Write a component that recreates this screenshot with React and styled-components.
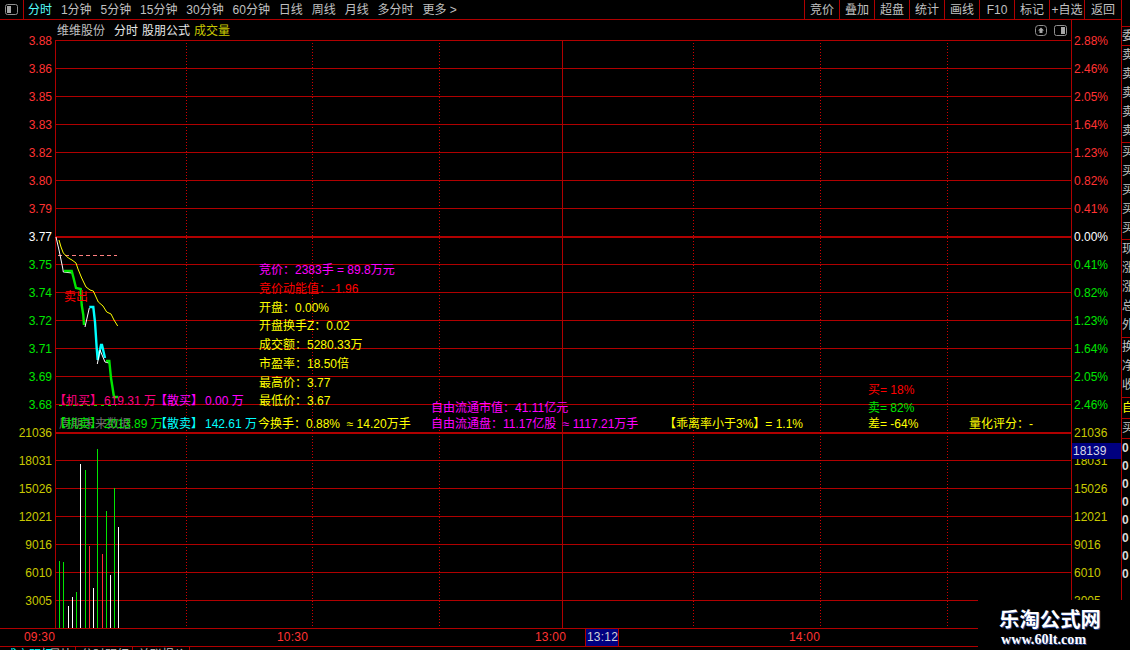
import React from 'react';
import styled, { createGlobalStyle } from 'styled-components';

const RED = '#ff3232';
const GREEN = '#00e600';
const YELLOW = '#c8c800';
const BRIGHT = '#ffff00';
const MAGENTA = '#ff00ff';
const CYAN = '#00ffff';
const PINK = '#ff0080';
const LINE = '#b00000';
const GREY = '#c0c0c0';

const Global = createGlobalStyle`
  html, body { margin: 0; padding: 0; background: #000; }
  * { box-sizing: border-box; }
`;

const Screen = styled.div`
  position: relative;
  display: flex;
  width: 1130px;
  height: 650px;
  overflow: hidden;
  background: #000;
  font: 12px/14px "Liberation Sans", "Noto Sans CJK SC", sans-serif;
  color: ${GREY};
`;
const Main = styled.div`
  display: flex;
  flex-direction: column;
  width: 1121px;
  flex: none;
`;
const TopBar = styled.div`
  display: flex;
  height: 20px;
  flex: none;
  border-bottom: 1px solid ${LINE};
`;
const ToggleCell = styled.div`
  display: flex;
  align-items: center;
  justify-content: center;
  width: 24px;
  border-right: 1px solid ${LINE};
  flex: none;
`;
const Tabs = styled.div`
  display: flex;
  align-items: center;
  gap: 8.9px;
  padding-left: 4px;
  flex: 1;
`;
const Tab = styled.span`
  color: ${p => (p.$active ? '#54fcfc' : GREY)};
  white-space: nowrap;
`;
const ToolButton = styled.span`
  display: flex;
  align-items: center;
  justify-content: center;
  width: ${p => p.$w || 35}px;
  flex: none;
  border-left: 1px solid ${LINE};
  white-space: nowrap;
`;
const TitleRow = styled.div`
  display: flex;
  height: 20px;
  flex: none;
`;
const TitleMain = styled.div`
  display: flex;
  align-items: center;
  flex: 1;
  padding: 1px 4px 0 57px;
`;
const TitleText = styled.span`
  margin-right: ${p => p.$gap || 0}px;
  color: ${p => p.$color || GREY};
  white-space: nowrap;
`;
const TitleIcons = styled.div`
  display: flex;
  align-items: center;
  gap: 7px;
  margin-left: auto;
  padding-bottom: 1px;
`;
const TitleCorner = styled.div`
  width: 50px;
  flex: none;
  border-left: 1px solid ${LINE};
`;
const ChartRow = styled.div`
  display: flex;
  height: 588px;
  flex: none;
`;
const LeftAxis = styled.div`
  display: flex;
  flex-direction: column;
  width: 55px;
  height: 588px;
  margin-top: -13px;
  padding-right: 3px;
  flex: none;
`;
const RightAxis = styled.div`
  position: relative;
  width: 50px;
  flex: none;
  border-left: 1px solid ${LINE};
`;
const RightLabels = styled.div`
  display: flex;
  flex-direction: column;
  height: 588px;
  margin-top: -13px;
  padding-left: 2px;
`;
const AxisLabel = styled.span`
  display: flex;
  align-items: center;
  justify-content: ${p => (p.$right ? 'flex-end' : 'flex-start')};
  height: 28px;
  flex: none;
  color: ${p => p.$color};
`;
const CursorValue = styled.div`
  position: absolute;
  left: 0;
  top: 403px;
  width: 49px;
  height: 16px;
  padding-left: 1px;
  background: #000080;
  color: #d8d8e8;
  line-height: 16px;
`;
const Plot = styled.div`
  position: relative;
  width: 1016px;
  height: 588px;
  flex: none;
`;
const ChartSvg = styled.svg`
  position: absolute;
  left: 0;
  top: 0;
  overflow: visible;
`;
const Stats = styled.div`
  position: absolute;
  left: 204px;
  top: 221px;
  display: flex;
  flex-direction: column;
  line-height: 18.75px;
  white-space: nowrap;
`;
const Stat = styled.span`
  color: ${p => p.$color || BRIGHT};
`;
const Note = styled.span`
  position: absolute;
  left: ${p => p.$x - 55}px;
  top: ${p => p.$y - 47}px;
  color: ${p => p.$color};
  white-space: nowrap;
`;
const Ledger = styled.div`
  position: absolute;
  left: -1px;
  top: ${p => p.$y - 47}px;
  display: flex;
  white-space: nowrap;
`;
const Tag = styled.span`
  width: 48px;
  flex: none;
  color: ${p => p.$color};
`;
const Amount = styled.span`
  width: ${p => p.$w}px;
  margin-left: 2px;
  flex: none;
  color: ${p => p.$color};
`;
const TimeAxis = styled.div`
  display: flex;
  height: 19px;
  flex: none;
  padding-left: 24px;
  border-top: 1px solid ${LINE};
  border-bottom: 1px solid ${LINE};
  line-height: 16px;
`;
const TimeSlot = styled.span`
  width: ${p => p.$w}px;
  flex: none;
  color: ${RED};
  letter-spacing: 0.2px;
`;
const TimeCursor = styled.span`
  width: 34px;
  flex: none;
  margin-right: 170px;
  padding-left: 1px;
  border-left: 1px solid ${LINE};
  border-right: 1px solid ${LINE};
  background: #000080;
  color: #d0d0d8;
  letter-spacing: 0.2px;
`;
const Footer = styled.div`
  display: flex;
  height: 4px;
  overflow: hidden;
  flex: none;
`;
const FooterTab = styled.span`
  width: ${p => p.$w}px;
  flex: none;
  padding: 1px 0 0 5px;
  border-right: 1px solid ${LINE};
  color: ${p => p.$color || GREY};
  white-space: nowrap;
`;
const Strip = styled.div`
  display: flex;
  flex-direction: column;
  width: 9px;
  height: 600px;
  flex: none;
  overflow: hidden;
  border-left: 1px solid ${LINE};
`;
const StripSpacer = styled.div`
  height: 26px;
  flex: none;
`;
const StripGroup = styled.div`
  display: flex;
  flex-direction: column;
  height: ${p => p.$h}px;
  flex: none;
  border-top: 1px solid ${LINE};
`;
const StripChar = styled.span`
  display: block;
  width: 12px;
  height: ${p => p.$h}px;
  line-height: ${p => p.$h}px;
  color: ${p => p.$color || GREY};
  font-weight: ${p => (p.$bold ? 700 : 400)};
`;
const Watermark = styled.div`
  position: absolute;
  right: 0;
  bottom: 0;
  width: 152px;
  height: 50px;
  display: flex;
  flex-direction: column;
  align-items: flex-start;
  padding: 6px 0 0 21px;
  background: #000;
`;
const WatermarkTitle = styled.span`
  color: #fff;
  font: 700 20.4px/24px "Noto Sans CJK SC", sans-serif;
  text-shadow: 1px 1px 0 #27408b;
  white-space: nowrap;
`;
const WatermarkUrl = styled.span`
  margin: 2px 0 0 2px;
  color: #fff;
  font: 700 14px/16px "Liberation Serif", serif;
  letter-spacing: 0.1px;
  text-shadow: 1px 1px 0 #27408b;
  white-space: nowrap;
`;

const leftLabels = [
  ['3.88', RED], ['3.86', RED], ['3.85', RED], ['3.83', RED], ['3.82', RED], ['3.80', RED], ['3.79', RED],
  ['3.77', '#fff'],
  ['3.75', GREEN], ['3.74', GREEN], ['3.72', GREEN], ['3.71', GREEN], ['3.69', GREEN], ['3.68', GREEN],
  ['21036', YELLOW], ['18031', YELLOW], ['15026', YELLOW], ['12021', YELLOW], ['9016', YELLOW], ['6010', YELLOW], ['3005', YELLOW],
];
const rightLabels = [
  ['2.88%', RED], ['2.46%', RED], ['2.05%', RED], ['1.64%', RED], ['1.23%', RED], ['0.82%', RED], ['0.41%', RED],
  ['0.00%', '#fff'],
  ['0.41%', GREEN], ['0.82%', GREEN], ['1.23%', GREEN], ['1.64%', GREEN], ['2.05%', GREEN], ['2.46%', GREEN],
  ['21036', YELLOW], ['18031', YELLOW], ['15026', YELLOW], ['12021', YELLOW], ['9016', YELLOW], ['6010', YELLOW], ['3005', YELLOW],
];
const tabs = ['1分钟', '5分钟', '15分钟', '30分钟', '60分钟', '日线', '周线', '月线', '多分时', '更多 >'];
const tools = ['竞价', '叠加', '超盘', '统计', '画线', 'F10', '标记', '+自选'];
const hLines = Array.from({ length: 20 }, (_, i) => 68 + i * 28).filter(y => y !== 236 && y !== 432);
const dotted = [186, 312, 439, 693, 820, 947];
const bars = [
  [59, 561, GREEN], [63, 562, GREEN], [68, 606, '#fff'], [72, 597, '#fff'], [76, 592, GREEN],
  [80, 464, '#fff'], [85, 470, GREEN], [89, 546, RED], [93, 588, '#fff'], [97, 449, GREEN],
  [102, 554, RED], [106, 511, GREEN], [110, 575, '#fff'], [114, 488, GREEN], [118, 527, '#fff'],
];
const pts = a => a.map(p => p.join(',')).join(' ');
const priceSegments = [
  { color: '#fff', w: 1, points: [[56, 237], [59, 250], [62.7, 268], [63.3, 272], [72, 273]] },
  { color: GREEN, w: 2.4, points: [[64, 271], [71.7, 271], [73.3, 277], [76, 288], [80.7, 289], [81.7, 305], [83.3, 315], [84, 325]] },
  { color: '#fff', w: 1, points: [[85, 327], [89.3, 308]] },
  { color: CYAN, w: 2.4, points: [[89.3, 307], [93.3, 307], [95, 322], [96.7, 348], [97.7, 360], [101, 345], [102, 345], [105, 358]] },
  { color: '#fff', w: 1, points: [[97.3, 364], [100, 350], [105, 362], [109, 363]] },
  { color: GREEN, w: 2.4, points: [[106, 361], [109.3, 361], [111, 378], [114, 397], [118.3, 397]] },
];
const avgLine = [[59, 240], [61, 247], [63.3, 253], [68.3, 258], [72, 260], [76, 263], [78, 269], [81.7, 278], [86, 287], [90, 290], [93.3, 291], [98.3, 302], [103, 306], [106.7, 312], [111, 314], [114, 320], [117.7, 326]];

const ToggleIcon = ({ side }) => (
  <svg width="13" height="11" viewBox="0 0 13 11">
    <rect x="0.5" y="0.5" width="12" height="10" rx="2" fill="#000" stroke="#909090" />
    <rect x={side === 'left' ? 2 : 7} y="2" width="4" height="7" fill="#a8a8a8" />
  </svg>
);
const UpIcon = () => (
  <svg width="12" height="11" viewBox="0 0 12 11">
    <rect x="0.5" y="0.5" width="11" height="10" rx="3" fill="#000" stroke="#909090" />
    <path d="M6 2.5 L9 5.5 H7.5 V8 H4.5 V5.5 H3 Z" fill="#a8a8a8" />
  </svg>
);

const ChartDrawing = () => (
  <ChartSvg width="1016" height="588" viewBox="0 0 1016 588">
    <g transform="translate(-55 -40)" fill="none">
      <g shapeRendering="crispEdges">
        <line x1="55" x2="1071" y1="40.5" y2="40.5" stroke={LINE} />
        {hLines.map(y => <line key={y} x1="55" x2="1071" y1={y + 0.5} y2={y + 0.5} stroke={LINE} />)}
        <line x1="55" x2="1071" y1="237" y2="237" stroke={LINE} strokeWidth="2" />
        <line x1="55" x2="1071" y1="433" y2="433" stroke={LINE} strokeWidth="2" />
        <line x1="55.5" x2="55.5" y1="40" y2="628" stroke={LINE} />
        <line x1="562.5" x2="562.5" y1="40" y2="628" stroke={LINE} />
        {dotted.map(x => (
          <line key={x} x1={x + 0.5} x2={x + 0.5} y1="43" y2="626" stroke="#d00000" strokeDasharray="1 2" />
        ))}
        <line x1="58" x2="117" y1="255.5" y2="255.5" stroke="#ff8080" strokeDasharray="4 3" />
        <line x1="59" x2="116" y1="405.5" y2="405.5" stroke={GREEN} strokeDasharray="3 4" />
        {bars.map(([x, top, color]) => (
          <line key={x} x1={x + 0.5} x2={x + 0.5} y1={top} y2="628" stroke={color} />
        ))}
      </g>
      <polyline points={pts(avgLine)} stroke="#ffff00" strokeWidth="1" />
      {priceSegments.map((s, i) => (
        <polyline key={i} points={pts(s.points)} stroke={s.color} strokeWidth={s.w} />
      ))}
    </g>
  </ChartSvg>
);

export default function App() {
  return (
    <Screen>
      <Global />
      <Main>
        <TopBar>
          <ToggleCell><ToggleIcon side="left" /></ToggleCell>
          <Tabs>
            <Tab $active>分时</Tab>
            {tabs.map(t => <Tab key={t}>{t}</Tab>)}
          </Tabs>
          {tools.map(t => <ToolButton key={t}>{t}</ToolButton>)}
          <ToolButton $w={37}>返回</ToolButton>
        </TopBar>
        <TitleRow>
          <TitleMain>
            <TitleText $gap={9}>维维股份</TitleText>
            <TitleText $gap={4} $color="#e8e8e8">分时</TitleText>
            <TitleText $gap={4} $color="#e8e8e8">股朋公式</TitleText>
            <TitleText $color={YELLOW}>成交量</TitleText>
            <TitleIcons>
              <UpIcon />
              <ToggleIcon side="right" />
            </TitleIcons>
          </TitleMain>
          <TitleCorner />
        </TitleRow>
        <ChartRow>
          <LeftAxis>
            {leftLabels.map(([t, c], i) => <AxisLabel key={i} $right $color={c}>{t}</AxisLabel>)}
          </LeftAxis>
          <Plot>
            <ChartDrawing />
            <Note $x={64} $y={297} $color="#ff0000">卖出</Note>
            <Stats>
              <Stat $color={MAGENTA}>竞价：2383手 = 89.8万元</Stat>
              <Stat $color="#ff0000">竞价动能值：-1.96</Stat>
              <Stat>开盘：0.00%</Stat>
              <Stat>开盘换手Z：0.02</Stat>
              <Stat>成交额：5280.33万</Stat>
              <Stat>市盈率：18.50倍</Stat>
              <Stat>最高价：3.77</Stat>
              <Stat>最低价：3.67</Stat>
            </Stats>
            <Ledger $y={401}>
              <Tag $color={PINK}>【机买】</Tag>
              <Amount $w={51} $color={PINK}>619.31 万</Amount>
              <Tag $color={MAGENTA}>【散买】</Tag>
              <Amount $w={53} $color={MAGENTA}>0.00 万</Amount>
            </Ledger>
            <Note $x={59} $y={424} $color="#707070">周期未来数据</Note>
            <Ledger $y={424}>
              <Tag $color={GREEN}>【机卖】</Tag>
              <Amount $w={51} $color={GREEN}>2013.89 万</Amount>
              <Tag $color={CYAN}>【散卖】</Tag>
              <Amount $w={53} $color={CYAN}>142.61 万</Amount>
              <Stat>今换手：0.88%{'\u00a0\u00a0'}≈ 14.20万手</Stat>
            </Ledger>
            <Note $x={431} $y={408} $color={MAGENTA}>自由流通市值：41.11亿元</Note>
            <Note $x={431} $y={424} $color={MAGENTA}>自由流通盘：11.17亿股{'\u00a0\u00a0'}≈ 1117.21万手</Note>
            <Note $x={664} $y={424} $color={BRIGHT}>【乖离率小于3%】= 1.1%</Note>
            <Note $x={868} $y={390} $color="#ff0000">买= 18%</Note>
            <Note $x={868} $y={408} $color={GREEN}>卖= 82%</Note>
            <Note $x={868} $y={424} $color={BRIGHT}>差= -64%</Note>
            <Note $x={969} $y={424} $color={BRIGHT}>量化评分：-</Note>
          </Plot>
          <RightAxis>
            <RightLabels>
              {rightLabels.map(([t, c], i) => <AxisLabel key={i} $color={c}>{t}</AxisLabel>)}
            </RightLabels>
            <CursorValue>18139</CursorValue>
          </RightAxis>
        </ChartRow>
        <TimeAxis>
          <TimeSlot $w={253}>09:30</TimeSlot>
          <TimeSlot $w={258}>10:30</TimeSlot>
          <TimeSlot $w={50}>13:00</TimeSlot>
          <TimeCursor>13:12</TimeCursor>
          <TimeSlot $w={60}>14:00</TimeSlot>
        </TimeAxis>
        <Footer>
          <FooterTab $w={44} $color={CYAN}>成交明细</FooterTab>
          <FooterTab $w={32}>量比</FooterTab>
          <FooterTab $w={57}>分时明细</FooterTab>
          <FooterTab $w={57}>关联报价</FooterTab>
        </Footer>
      </Main>
      <Strip>
        <StripSpacer />
        <StripGroup $h={19}>
          <StripChar $h={18}>委</StripChar>
        </StripGroup>
        <StripGroup $h={97}>
          {['卖', '卖', '卖', '卖', '卖'].map((c, i) => <StripChar key={i} $h={19}>{c}</StripChar>)}
        </StripGroup>
        <StripGroup $h={97}>
          {['买', '买', '买', '买', '买'].map((c, i) => <StripChar key={i} $h={19}>{c}</StripChar>)}
        </StripGroup>
        <StripGroup $h={98}>
          {['现', '涨', '涨', '总', '外'].map((c, i) => <StripChar key={i} $h={19}>{c}</StripChar>)}
        </StripGroup>
        <StripGroup $h={60}>
          {['换', '净', '收'].map((c, i) => <StripChar key={i} $h={19}>{c}</StripChar>)}
        </StripGroup>
        <StripGroup $h={21}>
          <StripChar $h={20} $color={BRIGHT}>自</StripChar>
        </StripGroup>
        <StripGroup $h={20}>
          <StripChar $h={19}>买</StripChar>
        </StripGroup>
        <StripGroup $h={150}>
          {[0, 1, 2, 3, 4, 5, 6, 7].map(i => <StripChar key={i} $h={18} $bold $color="#d8d8d8">0</StripChar>)}
        </StripGroup>
      </Strip>
      <Watermark>
        <WatermarkTitle>乐淘公式网</WatermarkTitle>
        <WatermarkUrl>www.60lt.com</WatermarkUrl>
      </Watermark>
    </Screen>
  );
}
